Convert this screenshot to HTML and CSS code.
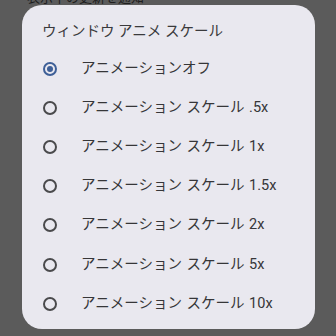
FILE: index.html
```html
<!DOCTYPE html>
<html lang="ja">
<head>
<meta charset="utf-8">
<link rel="stylesheet" href="styles.css">
</head>
<body>
<div class="screen">
  <div class="bg-text">表示中の更新を通知</div>
  <div class="dialog">
    <div class="title">ウィンドウ アニメ スケール</div>
    <ul class="options">
      <li class="option"><span class="radio checked"></span><span class="label">アニメーションオフ</span></li>
      <li class="option"><span class="radio"></span><span class="label">アニメーション スケール .5x</span></li>
      <li class="option"><span class="radio"></span><span class="label">アニメーション スケール 1x</span></li>
      <li class="option"><span class="radio"></span><span class="label">アニメーション スケール 1.5x</span></li>
      <li class="option"><span class="radio"></span><span class="label">アニメーション スケール 2x</span></li>
      <li class="option"><span class="radio"></span><span class="label">アニメーション スケール 5x</span></li>
      <li class="option"><span class="radio"></span><span class="label">アニメーション スケール 10x</span></li>
    </ul>
  </div>
</div>
</body>
</html>
```
FILE: styles.css
```css
html, body {
  margin: 0;
  padding: 0;
}
body {
  background: #5b5b5b;
  font-family: Roboto, "Noto Sans CJK JP", sans-serif;
}
.screen {
  position: relative;
  width: 336px;
  height: 336px;
  overflow: hidden;
  background: #5b5b5b;
}
.bg-text {
  margin-top: -10px;
  padding-left: 27px;
  font-size: 13px;
  line-height: 16px;
  color: #1e1e1e;
}
.dialog {
  position: absolute;
  left: 22px;
  top: 5px;
  width: 293px;
  height: 324px;
  background: #e9e8ef;
  border-radius: 20px;
  box-sizing: border-box;
  padding: 17px 0 0 0;
}
.title {
  padding-left: 20px;
  font-size: 14.5px;
  line-height: 20px;
  color: #3a3a3c;
}
.options {
  list-style: none;
  margin: 7px 0 0 0;
  padding: 0;
}
.option {
  display: flex;
  align-items: center;
  height: 39.2px;
  padding-left: 21px;
}
.radio {
  width: 14px;
  height: 14px;
  box-sizing: border-box;
  border: 2px solid #4a4a4c;
  border-radius: 50%;
  display: flex;
  align-items: center;
  justify-content: center;
  flex-shrink: 0;
}
.radio.checked {
  border-color: #3e5f97;
}
.radio.checked::after {
  content: "";
  width: 6px;
  height: 6px;
  border-radius: 50%;
  background: #3e5f97;
}
.label {
  margin-left: 24px;
  font-size: 14.5px;
  line-height: 20px;
  word-spacing: 1px;
  color: #363638;
}
```
